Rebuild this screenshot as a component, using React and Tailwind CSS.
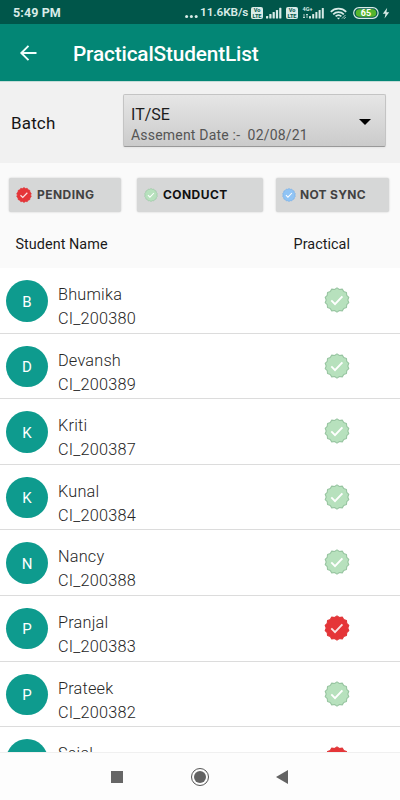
import React from 'react';

const students = [
  { name: 'Bhumika', code: 'CI_200380', status: 'conduct' },
  { name: 'Devansh', code: 'CI_200389', status: 'conduct' },
  { name: 'Kriti', code: 'CI_200387', status: 'conduct' },
  { name: 'Kunal', code: 'CI_200384', status: 'conduct' },
  { name: 'Nancy', code: 'CI_200388', status: 'conduct' },
  { name: 'Pranjal', code: 'CI_200383', status: 'pending' },
  { name: 'Prateek', code: 'CI_200382', status: 'conduct' },
  { name: 'Sejal', status: 'pending' },
];

const badgeColors = {
  pending: { fill: '#e53538', stroke: '#e0393b', tick: '#fbe3e3' },
  conduct: { fill: '#b7e1bd', stroke: '#98c5a1', tick: '#ffffff' },
  sync: { fill: '#90c4f5', stroke: '#74aee8', tick: '#ffffff' },
};

// scalloped edge, 14 bumps round a 26 x 26 box
const badgePoints = Array.from({ length: 28 }, (_, i) => {
  const r = i % 2 === 0 ? 12.1 : 10.8;
  const a = (i * Math.PI) / 14 - Math.PI / 2;
  return `${(13 + r * Math.cos(a)).toFixed(2)},${(13 + r * Math.sin(a)).toFixed(2)}`;
}).join(' ');

const Badge = ({ status, className }) => {
  const c = badgeColors[status];
  return (
    <svg viewBox="0 0 26 26" className={className}>
      <polygon points={badgePoints} fill={c.fill} stroke={c.stroke} strokeWidth="1.1" strokeLinejoin="round" />
      <path d="M7.3 13.4l3.7 3.7 7.4-7.8" fill="none" stroke={c.tick} strokeWidth="1.9" />
    </svg>
  );
};

const Signal = () => (
  <svg viewBox="0 0 16 12" className="h-3 w-4" fill="#d8ebe7">
    <rect x="0" y="9" width="2.2" height="2.5" rx="0.6" />
    <rect x="3.3" y="7" width="2.2" height="4.5" rx="0.6" />
    <rect x="6.6" y="5" width="2.2" height="6.5" rx="0.6" />
    <rect x="9.9" y="3" width="2.2" height="8.5" rx="0.6" />
    <rect x="13.2" y="0.8" width="2.2" height="10.7" rx="0.6" />
  </svg>
);

const VoLte = () => (
  <svg viewBox="0 0 12 12" className="h-3 w-3">
    <rect width="12" height="12" rx="2" fill="#d8ebe7" />
    <g fill="#00564a" fontFamily="Roboto, sans-serif" fontWeight="700" fontSize="5.6" textAnchor="middle">
      <text x="6" y="5.4">Vo</text>
      <text x="6" y="10.8">LTE</text>
    </g>
  </svg>
);

const StatusBar = () => (
  <div className="flex h-6 shrink-0 items-center bg-[#00564a] pt-0.5 pl-[13px] text-[12.5px] font-bold text-[#d8ebe7]">
    <span className="w-[172px] tracking-[0.1px]">5:49 PM</span>
    <svg viewBox="0 0 13 12" className="h-3 w-[13px]" fill="#d8ebe7">
      <circle cx="1.6" cy="9.5" r="1.5" />
      <circle cx="6.4" cy="9.5" r="1.5" />
      <circle cx="11.2" cy="9.5" r="1.5" />
    </svg>
    <span className="ml-[2px] w-[50.5px] text-[11.8px] font-semibold tracking-[-0.1px] whitespace-nowrap">11.6KB/s</span>
    <VoLte />
    <span className="ml-[3px] flex"><Signal /></span>
    <span className="ml-[4.5px] flex"><VoLte /></span>
    <svg viewBox="0 0 23 14" className="ml-[4px] h-3.5 w-[23px]" fill="#d8ebe7">
      <text x="0.5" y="5" fontFamily="Roboto, sans-serif" fontWeight="700" fontSize="5.5">4G+</text>
      <path d="M2 8v4M1 11l1 1 1-1M5 12V8M4 9l1-1 1 1" fill="none" stroke="#d8ebe7" strokeWidth="0.8" />
      <rect x="7" y="10" width="2" height="2.5" rx="0.5" />
      <rect x="10.2" y="8" width="2" height="4.5" rx="0.5" />
      <rect x="13.4" y="6" width="2" height="6.5" rx="0.5" />
      <rect x="16.6" y="4" width="2" height="8.5" rx="0.5" />
      <rect x="19.8" y="2" width="2" height="10.5" rx="0.5" />
    </svg>
    <svg viewBox="0 0 17 13" className="ml-[5px] h-[13px] w-[17px]" fill="none" stroke="#d8ebe7" strokeWidth="1.7">
      <path d="M0.8 4.8C5 0.6 12 0.6 16.2 4.8" />
      <path d="M3.2 7.3C6.1 4.4 10.9 4.4 13.8 7.3" />
      <path d="M5.6 9.4c1.7-1.6 4.1-1.6 5.8 0" />
      <path d="M6.9 10.8L8.5 12.6L10.1 10.8Z" fill="#d8ebe7" stroke="none" />
      <path d="M12 11.5l3.5-3.5M13.8 12l2-2" strokeWidth="0.8" />
    </svg>
    <svg viewBox="0 0 26 12" className="ml-[6px] h-3 w-[26px]">
      <rect x="0.7" y="0.7" width="24.4" height="10.6" rx="5.3" fill="#00564a" stroke="#d8ebe7" strokeWidth="1.2" />
      <path d="M6.5 2.2h13a3.8 3.8 0 0 1 0 7.6h-13a3.8 3.8 0 0 1 0-7.6z" fill="#55b52c" />
      <text x="13" y="9.2" fill="#ffffff" textAnchor="middle" fontFamily="Roboto, sans-serif" fontWeight="700" fontSize="9">65</text>
    </svg>
    <svg viewBox="0 0 8 12" className="ml-[3px] h-3 w-2" fill="#d8ebe7">
      <path d="M5.2 0.8L0.8 6.8h2.7L2.5 11.4L7.2 5.2H4.4z" />
    </svg>
  </div>
);

const Toolbar = () => (
  <div className="flex h-[57px] shrink-0 items-center bg-[#038675] pt-0.5 pl-[19px] text-white">
    <svg viewBox="0 0 18 18" className="-mt-0.5 h-[18px] w-[18px]" fill="none" stroke="#f1fffc" strokeWidth="1.9">
      <path d="M17.5 9H2.5M9.5 1.8L2.3 9L9.5 16.2" />
    </svg>
    <h1 className="ml-[36px] pt-0.5 text-[20.8px] font-medium tracking-[-0.15px]">PracticalStudentList</h1>
  </div>
);

const BatchPicker = () => (
  <div className="flex h-[82px] shrink-0 border-t border-[#c5dcd8] bg-[#f1f1f1] pl-[11px]">
    <label className="w-[112px] pt-[29px] text-[17px] leading-6 tracking-[0.15px] text-[#161616]">Batch</label>
    <div className="mt-3 flex h-[53px] w-[263px] items-center justify-between rounded-xs border border-[#c4c4c4] border-b-[#999] bg-gradient-to-b from-[#e6e6e6] to-[#cbcbcb] pl-[7px] shadow-xs">
      <div className="pt-[7px]">
        <div className="text-base leading-[21px] text-[#1c1c1c]">IT/SE</div>
        <div className="text-[14px] leading-5 tracking-[0.2px] whitespace-pre text-[#555]">Assement Date :-  02/08/21</div>
      </div>
      <svg viewBox="0 0 12 6" className="mt-0.5 mr-[14px] h-1.5 w-3">
        <path d="M0 0h12L6 6z" fill="#000" />
      </svg>
    </div>
  </div>
);

const filterClass = "flex h-[34px] items-center rounded-xs bg-[#d6d7d7] pl-[7px] font-['Inter',sans-serif] text-[12px] font-bold shadow-[0_0_2px_rgba(0,0,0,0.22)]";

const Filters = () => (
  <div className="flex pt-[14.5px] pl-[9px]">
    <div className={`${filterClass} w-[112px] text-[#424242]`}>
      <Badge status="pending" className="mr-[5px] h-4 w-4" />
      <span className="pt-px tracking-[0.45px]">PENDING</span>
    </div>
    <div className={`${filterClass} ml-4 w-[126px] text-[#111]`}>
      <Badge status="conduct" className="mr-[5px] h-3.5 w-3.5" />
      <span className="pt-px tracking-[0.45px]">CONDUCT</span>
    </div>
    <div className={`${filterClass} ml-[13px] w-[113px] text-[#424242]`}>
      <Badge status="sync" className="mr-[4px] -ml-px h-3.5 w-3.5" />
      <span className="pt-px tracking-[0.3px]">NOT SYNC</span>
    </div>
  </div>
);

const StudentRow = ({ student }) => (
  <li className="flex h-[65.6px] shrink-0 border-b border-[#dcdcdc] pl-[6px]">
    <div className="mt-[12px] flex h-[41.5px] w-[42px] items-center justify-center rounded-full bg-[#0e9b8e] text-[15px] text-white">
      <span className="pt-0.5">{student.name[0]}</span>
    </div>
    <div className="ml-[10px] w-[267px] pt-[15px] text-[16.3px] leading-6 font-light tracking-[0.2px] text-[#262626]">
      <div>{student.name}</div>
      {student.code && <div>{student.code}</div>}
    </div>
    <Badge status={student.status} className="mt-[19px] h-[26px] w-[26px] -translate-x-px" />
  </li>
);

const NavBar = () => (
  <div className="flex h-12 shrink-0 items-center border-t border-[#f0f0f0] bg-[#fdfdfd] pl-[111px]">
    <div className="h-3 w-3 bg-[#666]"></div>
    <div className="ml-[68px] flex h-[18px] w-[18px] items-center justify-center rounded-full border border-[#555]">
      <div className="h-3 w-3 rounded-full bg-[#636363]"></div>
    </div>
    <svg viewBox="0 0 12 14" className="ml-[67px] h-3.5 w-3">
      <path d="M12 0v14L0 7z" fill="#636363" />
    </svg>
  </div>
);

export default function App() {
  return (
    <div className="flex h-[800px] w-[400px] flex-col overflow-hidden bg-white font-['Roboto',sans-serif]">
      <StatusBar />
      <Toolbar />
      <BatchPicker />
      <div className="h-[105px] shrink-0 bg-[#fafafa]">
        <Filters />
        <div className="flex pt-[21px] pl-[15.5px] text-[14.4px] leading-6 tracking-[0.05px] text-[#1b1b1b]">
          <span className="w-[278px]">Student Name</span>
          <span>Practical</span>
        </div>
      </div>
      <ul className="flex min-h-0 flex-1 flex-col overflow-hidden">
        {students.map((student) => (
          <StudentRow key={student.name} student={student} />
        ))}
      </ul>
      <NavBar />
    </div>
  );
}
